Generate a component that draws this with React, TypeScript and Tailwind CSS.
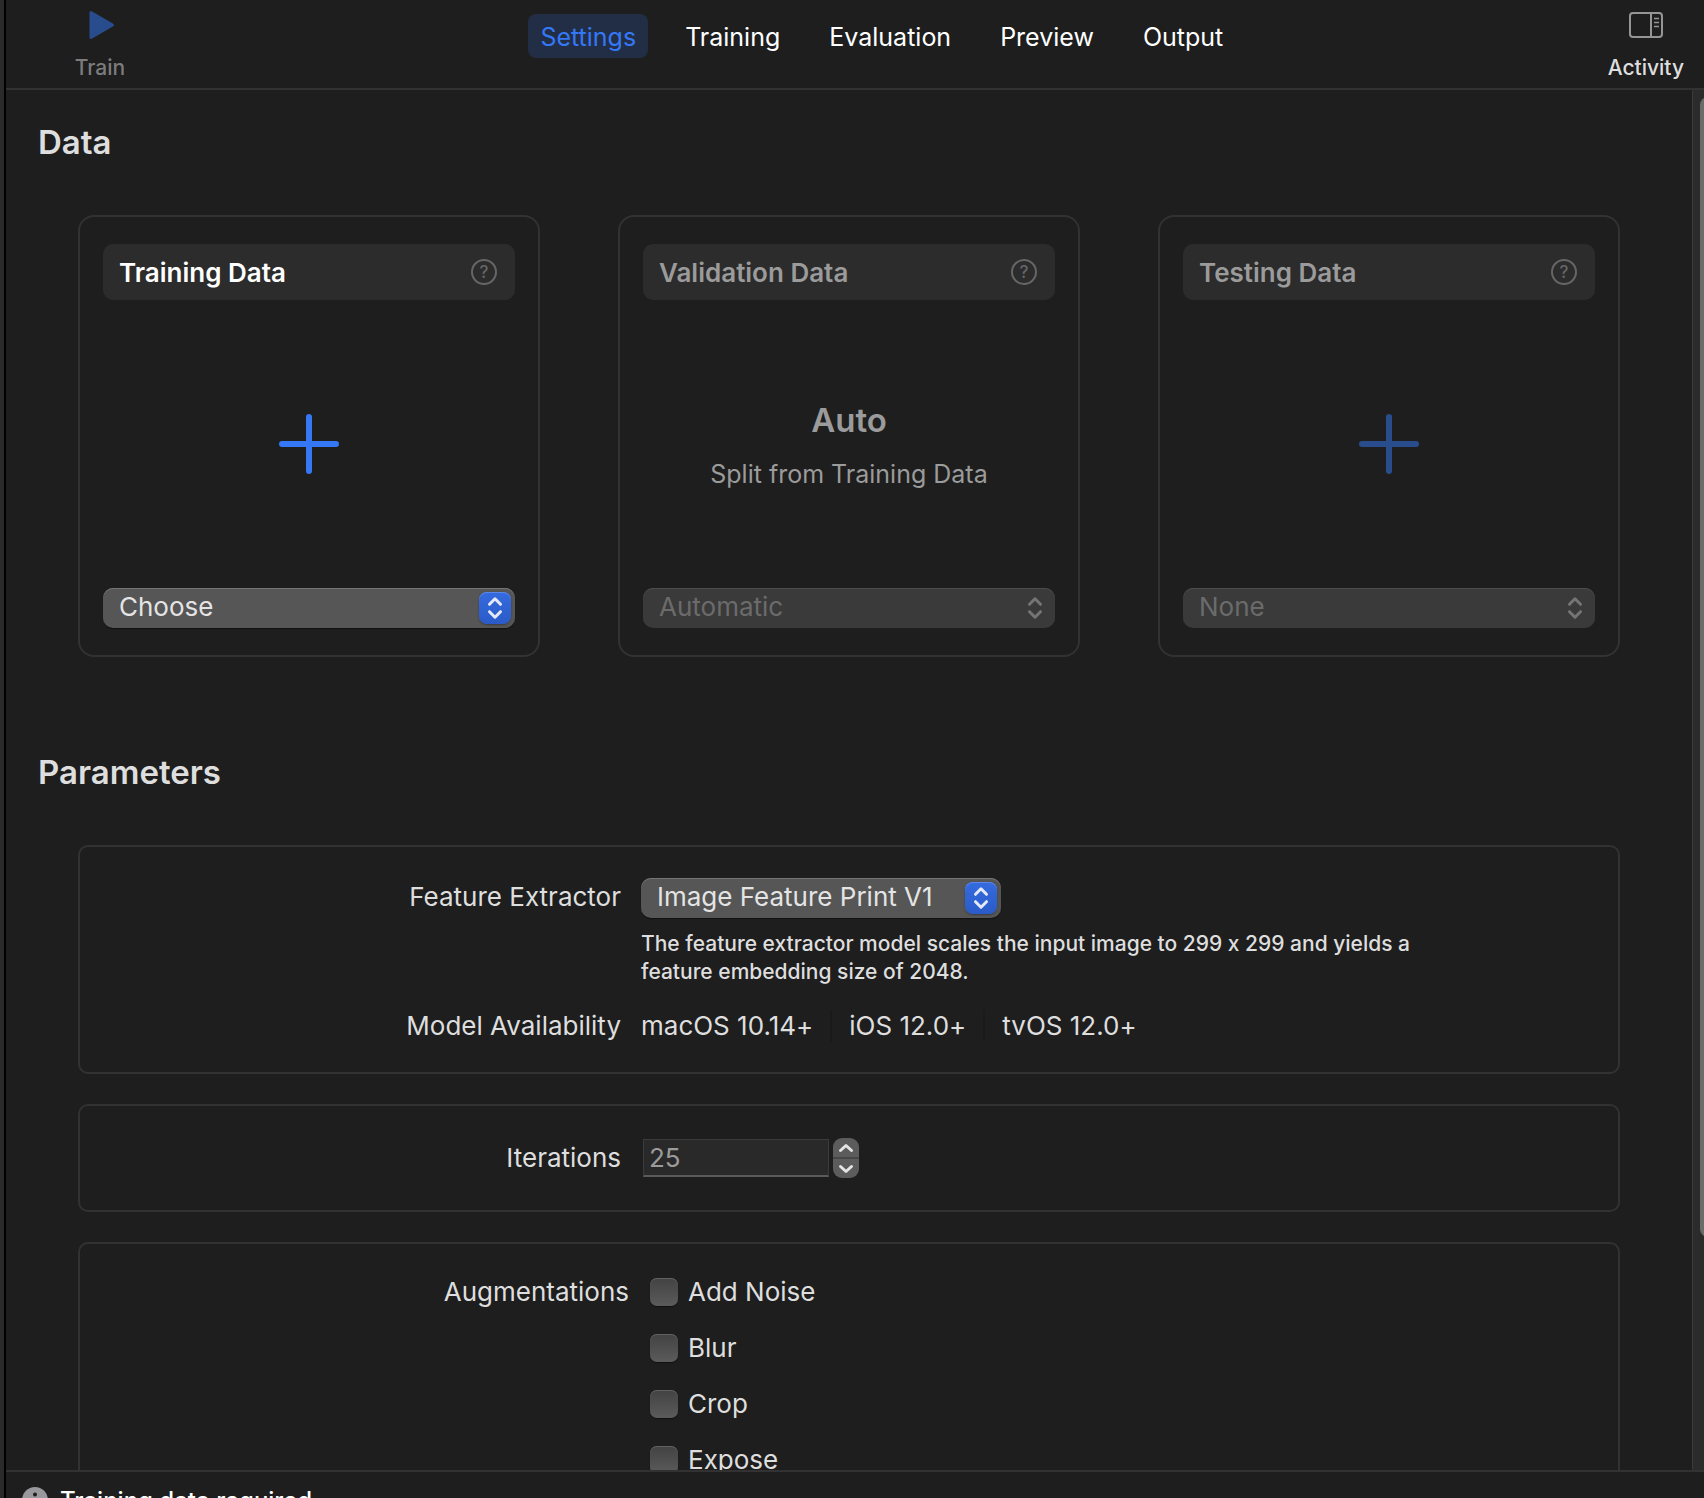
import { useState } from 'react';

const tabs = ['Settings', 'Training', 'Evaluation', 'Preview', 'Output'];

const augmentations = ['Add Noise', 'Blur', 'Crop', 'Expose'];

const platforms = ['macOS 10.14+', 'iOS 12.0+', 'tvOS 12.0+'];

function Chevrons() {
  return (
    <svg width="16" height="24" viewBox="0 0 16 24" fill="none" stroke="currentColor" strokeWidth="3" strokeLinecap="round" strokeLinejoin="round">
      <path d="M2.5 8.3 8 2.8l5.5 5.5M2.5 15.7 8 21.2l5.5-5.5" />
    </svg>
  );
}

function Plus() {
  return (
    <svg width="60" height="60" viewBox="0 0 60 60" fill="none" stroke="currentColor" strokeWidth="6" strokeLinecap="round">
      <path d="M30 3v54M3 30h54" />
    </svg>
  );
}

type PopupProps = {
  id: string;
  label?: string;
  value: string;
  disabled?: boolean;
};

function Popup({ id, label, value, disabled }: PopupProps) {
  return (
    <div className="relative w-full">
      <select
        id={id}
        aria-label={label}
        disabled={disabled}
        className="block h-10 w-full appearance-none rounded-[10px] bg-[#565656] pr-12 pb-[2px] pl-4 text-[26px] leading-[38px] text-[#e4e4e4] shadow-[inset_0_1px_0_#757575,0_1px_1px_#111111] outline-none disabled:bg-[#3a3a3a] disabled:text-[#6b6b6b] disabled:opacity-100 disabled:shadow-[inset_0_1px_0_#4c4c4c]"
      >
        <option>{value}</option>
      </select>
      <span
        className={
          disabled
            ? 'pointer-events-none absolute top-1 right-1 flex size-8 items-center justify-center text-[#757575]'
            : 'pointer-events-none absolute top-1 right-1 flex size-8 items-center justify-center rounded-lg bg-linear-to-b from-[#356be0] to-[#2a5bc8] text-[#e4e9f7] shadow-[inset_0_1px_0_#5c87e8,0_1px_2px_#3c3c3c]'
        }
      >
        <Chevrons />
      </span>
    </div>
  );
}

type DataCardProps = {
  title: string;
  value: string;
  disabled?: boolean;
  children: React.ReactNode;
};

function DataCard({ title, value, disabled, children }: DataCardProps) {
  return (
    <div className="flex flex-col rounded-2xl border-2 border-[#323232] px-[23px] py-[27px]">
      <div className="flex h-14 items-center justify-between rounded-[10px] bg-[#2c2c2c] pr-[18px] pl-4">
        <h3 className={disabled ? 'text-[26px] font-semibold text-[#9b9b9b]' : 'text-[26px] font-semibold text-white'}>{title}</h3>
        <button aria-label={`About ${title}`} className="flex size-[26px] items-center justify-center rounded-full border-2 border-[#666666] text-[17px] leading-none font-medium text-[#666666]">
          ?
        </button>
      </div>
      <div className="flex h-72 flex-col items-center justify-center">{children}</div>
      <Popup id={title} label={title} value={value} disabled={disabled} />
    </div>
  );
}

export default function App() {
  const [active, setActive] = useState('Settings');

  return (
    <div className="flex h-screen overflow-hidden bg-[#1e1e1e] font-['Inter',sans-serif] text-[#dedede] [font-feature-settings:'calt'_0]">
      <div className="w-[6px] shrink-0 border-r-2 border-black bg-[#2a2a2a]" />

      <div className="flex min-w-0 flex-1 flex-col">
        <header className="flex h-[90px] shrink-0 items-start justify-between border-b-2 border-[#323232] pr-5 pl-[38px]">
          <button disabled className="flex w-[112px] flex-col items-center pt-[10px] text-[21px] leading-7 font-medium text-[#7c7c7c]">
            <svg width="30" height="30" viewBox="0 0 30 30" className="mb-[14px] text-[#294c8c]" fill="currentColor" stroke="currentColor" strokeWidth="3" strokeLinejoin="round">
              <path d="M6 2.5v25L27.5 15Z" />
            </svg>
            Train
          </button>

          <nav className="flex gap-[25px] pt-[14px]">
            {tabs.map((tab) => (
              <button
                key={tab}
                onClick={() => setActive(tab)}
                className={
                  tab === active
                    ? 'h-11 rounded-lg bg-[#222e46] px-3 pt-[3px] text-[25px] text-[#3478f6]'
                    : 'h-11 rounded-lg px-3 pt-[3px] text-[25px] text-white'
                }
              >
                {tab}
              </button>
            ))}
          </nav>

          <button className="flex flex-col items-center pt-[11px] text-[21px] leading-7 font-medium text-[#dedede]">
            <svg width="36" height="28" viewBox="0 0 36 28" className="mb-[15px] text-[#959595]" fill="none" stroke="currentColor" strokeWidth="2">
              <rect x="2" y="2" width="32" height="24" rx="3" />
              <path d="M23 2v24" />
              <path d="M26 7.5h5M26 11.5h5M26 15.5h5" strokeWidth="1.5" />
            </svg>
            Activity
          </button>
        </header>

        <div className="flex min-h-0 flex-1">
          <main className="min-w-0 flex-1 overflow-hidden pt-8">
            <section>
              <h2 className="pl-8 text-[33px] leading-10 font-semibold">Data</h2>
              <div className="mt-[53px] grid grid-cols-3 gap-[78px] px-[72px]">
                <DataCard title="Training Data" value="Choose">
                  <button aria-label="Add training data" className="text-[#3478f6]">
                    <Plus />
                  </button>
                </DataCard>
                <DataCard title="Validation Data" value="Automatic" disabled>
                  <p className="pt-[6px] text-[33px] leading-10 font-semibold text-[#9b9b9b]">Auto</p>
                  <p className="mt-[14px] text-[25px] leading-10 text-[#9b9b9b]">Split from Training Data</p>
                </DataCard>
                <DataCard title="Testing Data" value="None" disabled>
                  <button aria-label="Add testing data" disabled className="text-[#294c8c]">
                    <Plus />
                  </button>
                </DataCard>
              </div>
            </section>

            <section className="mt-[95px]">
              <h2 className="pl-8 text-[33px] leading-10 font-semibold">Parameters</h2>
              <div className="mt-[53px] flex flex-col gap-[30px] px-[72px] text-[26px]">
                <div className="grid grid-cols-[541px_minmax(0,1fr)] gap-x-5 rounded-[10px] border-2 border-[#323232] pt-[31px] pb-[30px]">
                  <label htmlFor="extractor" className="text-right leading-[38px]">Feature Extractor</label>
                  <div>
                    <div className="flex w-[360px]">
                      <Popup id="extractor" value="Image Feature Print V1" />
                    </div>
                    <p className="mt-3 max-w-[800px] text-[21px] leading-7 font-medium">
                      The feature extractor model scales the input image to 299 x 299 and yields a feature embedding size of 2048.
                    </p>
                  </div>
                  <span className="mt-6 text-right leading-8">Model Availability</span>
                  <ul className="mt-6 flex items-center divide-x-2 divide-[#1a1a1a] leading-8">
                    {platforms.map((platform) => (
                      <li key={platform} className="px-[17px] first:pl-0">{platform}</li>
                    ))}
                  </ul>
                </div>

                <div className="grid grid-cols-[541px_minmax(0,1fr)] gap-x-[22px] rounded-[10px] border-2 border-[#323232] py-8">
                  <label htmlFor="iterations" className="text-right leading-10">Iterations</label>
                  <div className="flex items-center gap-1">
                    <input
                      id="iterations"
                      defaultValue="25"
                      className="h-[38px] w-[186px] border border-b-2 border-[#3a3a3a] border-b-[#5a5a5a] bg-[#292929] px-[5px] text-[#9b9b9b] outline-none"
                    />
                    <div className="flex h-10 w-[26px] flex-col divide-y-2 divide-[#474747] overflow-hidden rounded-[9px] bg-[#5c5c5c] text-[#e4e4e4]">
                      <button aria-label="Increase" className="flex flex-1 items-center justify-center">
                        <svg width="16" height="10" viewBox="0 0 16 10" fill="none" stroke="currentColor" strokeWidth="3" strokeLinecap="round" strokeLinejoin="round">
                          <path d="M2.5 7.5 8 2.5l5.5 5" />
                        </svg>
                      </button>
                      <button aria-label="Decrease" className="flex flex-1 items-center justify-center">
                        <svg width="16" height="10" viewBox="0 0 16 10" fill="none" stroke="currentColor" strokeWidth="3" strokeLinecap="round" strokeLinejoin="round">
                          <path d="M2.5 2.5 8 7.5l5.5-5" />
                        </svg>
                      </button>
                    </div>
                  </div>
                </div>

                <div className="grid grid-cols-[549px_minmax(0,1fr)] gap-x-[21px] rounded-[10px] border-2 border-[#323232] py-[34px] leading-7">
                  <span className="text-right">Augmentations</span>
                  <div className="flex flex-col gap-7">
                    {augmentations.map((name) => (
                      <label key={name} className="flex items-center gap-[10px]">
                        <input
                          type="checkbox"
                          className="size-7 appearance-none rounded-[7px] bg-linear-to-b from-[#434343] to-[#5b5b5b] shadow-[inset_0_1px_0_#606060,0_1px_1px_#111111] checked:from-[#356be0] checked:to-[#2a5bc8]"
                        />
                        {name}
                      </label>
                    ))}
                  </div>
                </div>
              </div>
            </section>
          </main>

          <div className="w-3 shrink-0 overflow-hidden border-l border-[#3a3a3a] bg-[#2b2b2b] pt-[7px] pl-[7px]">
            <div className="h-[83%] w-4 rounded-lg bg-[#6b6b6b]" />
          </div>
        </div>

        <footer className="flex h-7 shrink-0 items-start gap-3 overflow-hidden border-t-2 border-[#323232] pt-[15px] pl-4 text-2xl leading-7 font-medium text-white">
          <svg width="26" height="26" viewBox="0 0 26 26" className="shrink-0">
            <circle cx="13" cy="13" r="13" fill="#98989d" />
            <circle cx="13" cy="7.5" r="2" fill="#1e1e1e" />
            <path d="M10.5 12H13.5V19M10 19.5h6.5" fill="none" stroke="#1e1e1e" strokeWidth="2" />
          </svg>
          <span>Training data required</span>
        </footer>
      </div>
    </div>
  );
}
